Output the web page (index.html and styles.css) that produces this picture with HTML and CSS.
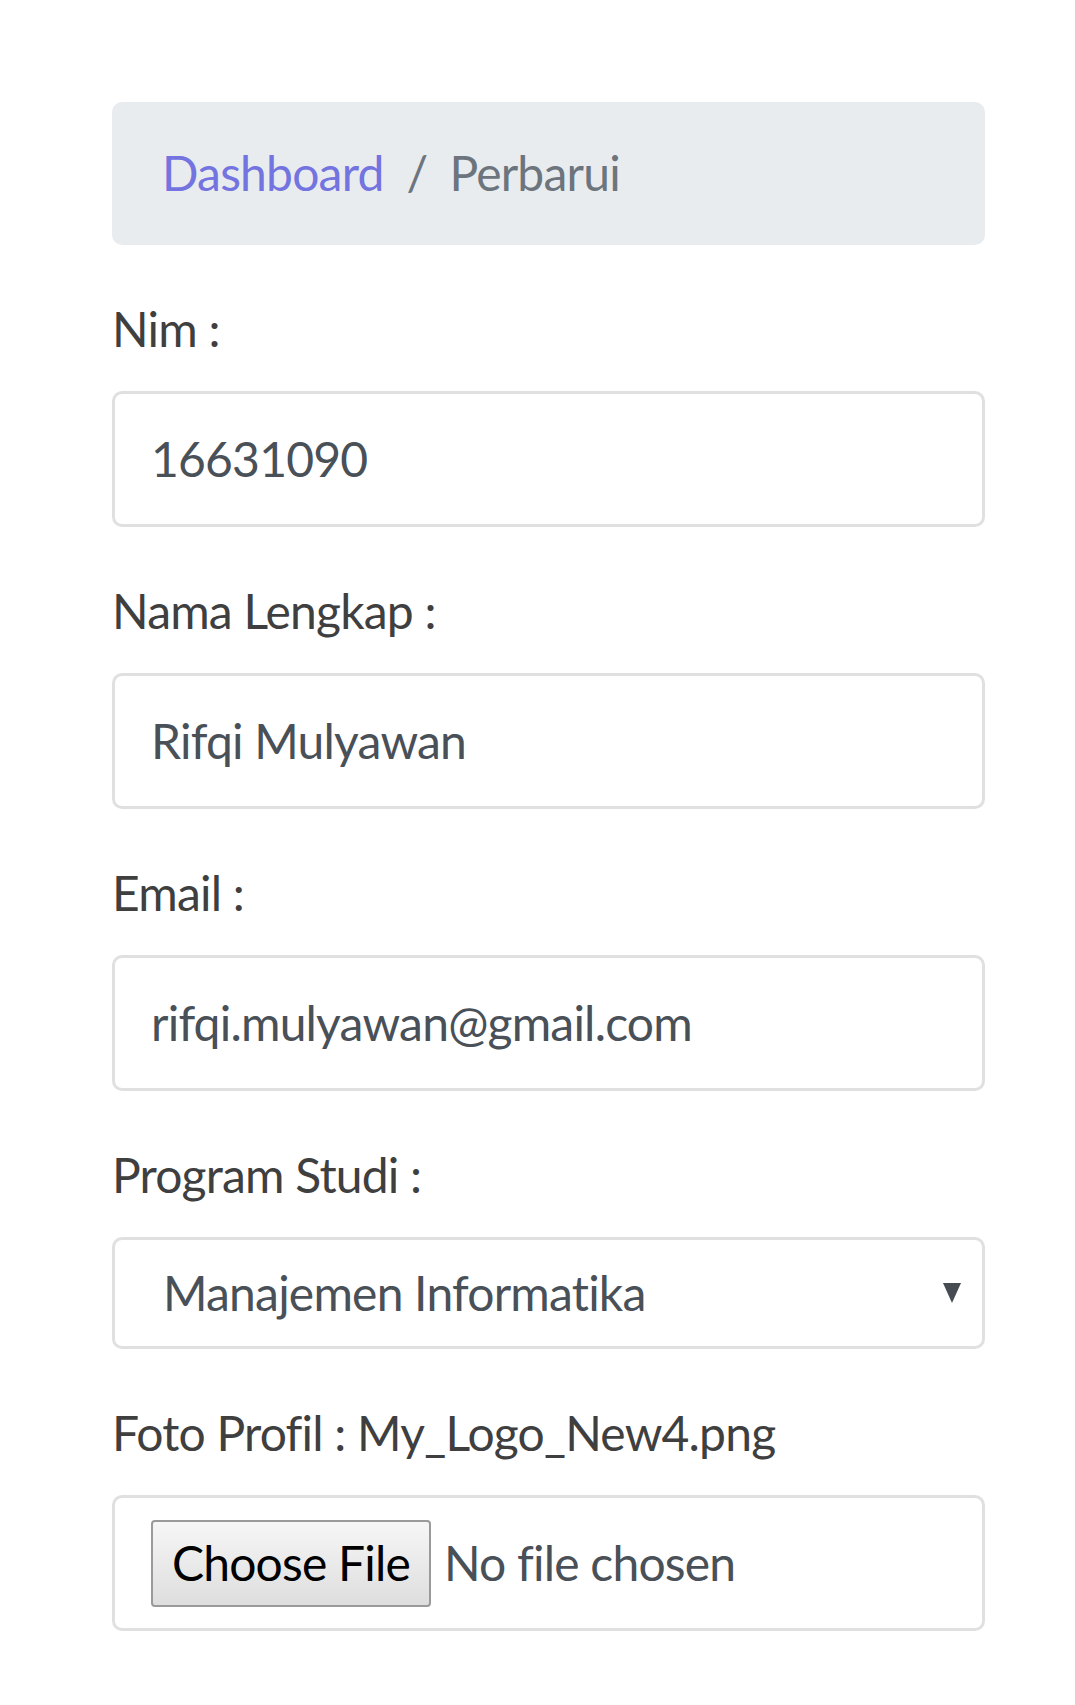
FILE: index.html
```html
<!DOCTYPE html>
<html lang="id">
<head>
<meta charset="utf-8">
<title>Perbarui</title>
<link rel="stylesheet" href="styles.css">
</head>
<body>
<main class="page">
  <nav class="crumbs">
    <a class="crumb-link" href="#">Dashboard</a>
    <span class="crumb-sep">/</span>
    <span class="crumb-active">Perbarui</span>
  </nav>

  <form class="form">
    <div class="group">
      <label class="label">Nim :</label>
      <div class="field">16631090</div>
    </div>
    <div class="group">
      <label class="label">Nama Lengkap :</label>
      <div class="field">Rifqi Mulyawan</div>
    </div>
    <div class="group">
      <label class="label">Email :</label>
      <div class="field">rifqi.mulyawan@gmail.com</div>
    </div>
    <div class="group">
      <label class="label">Program Studi :</label>
      <div class="select">
        <span class="select-text">Manajemen Informatika</span>
        <svg class="select-arrow" width="18" height="20" viewBox="0 0 18 20"><polygon points="0,0 18,0 9,20" fill="#474c53"/></svg>
      </div>
    </div>
    <div class="group">
      <label class="label">Foto Profil : My_Logo_New4.png</label>
      <div class="field file">
        <span class="file-btn">Choose File</span>
        <span class="file-name">No file chosen</span>
      </div>
    </div>
  </form>
</main>
</body>
</html>
```

FILE: styles.css
```css
html, body {
  margin: 0;
  padding: 0;
  background: #ffffff;
}

body {
  font-family: Lato, "Open Sans", "Liberation Sans", sans-serif;
  font-size: 48px;
  line-height: 1.5;
  letter-spacing: -0.8px;
  font-variant-ligatures: none;
  color: #3f3f3f;
}

.page {
  padding: 102px 90px 40px 112px;
}

.crumbs {
  display: flex;
  align-items: center;
  background: #e9ecef;
  border-radius: 10px;
  padding: 35px 48px 36px 50px;
  margin-bottom: 48px;
}

.crumb-link {
  color: #7474e0;
  text-decoration: none;
}

.crumb-sep {
  color: #6c757d;
  padding: 0 22px 0 23px;
}

.crumb-active {
  color: #6c757d;
}

.group {
  margin-bottom: 48px;
}

.label {
  display: block;
  margin-bottom: 26px;
  color: #3f3f3f;
}

.field {
  display: flex;
  align-items: center;
  height: 136px;
  box-sizing: border-box;
  border: 3px solid #e0e0e0;
  border-radius: 10px;
  padding: 0 36px;
  color: #495057;
}

.select {
  position: relative;
  display: flex;
  align-items: center;
  height: 112px;
  box-sizing: border-box;
  border: 3px solid #e0e0e0;
  border-radius: 10px;
  padding: 0 48px;
  color: #495057;
}

.select-arrow {
  position: absolute;
  right: 21px;
  top: 43px;
}

.file {
  padding: 0 36px;
}

.file-btn {
  display: flex;
  align-items: center;
  justify-content: center;
  box-sizing: border-box;
  width: 280px;
  height: 87px;
  border: 2px solid #9a9a9a;
  border-radius: 4px;
  background: linear-gradient(#f6f6f6, #dedede);
  color: #000;
  margin-right: 13px;
}

.file-name {
  color: #495057;
}
```
